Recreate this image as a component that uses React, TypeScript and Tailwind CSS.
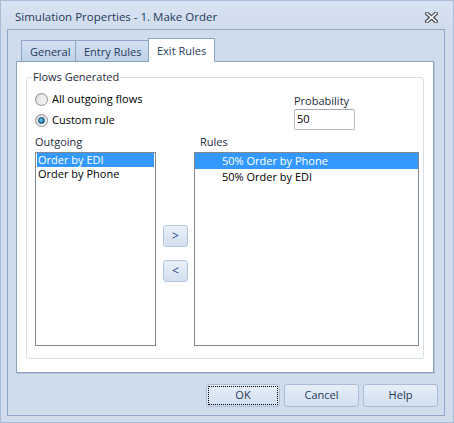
import React from "react";

type ItemProps = { label: string; selected?: boolean };

function CloseGlyph() {
  return (
    <svg width="13" height="11" viewBox="0 0 13 11">
      <path d="M2 1.5 L11 9.5 M11 1.5 L2 9.5" stroke="#4a4f57" strokeWidth="4" strokeLinecap="square" />
      <path d="M2 1.5 L11 9.5 M11 1.5 L2 9.5" stroke="#ffffff" strokeWidth="1.6" strokeLinecap="square" />
    </svg>
  );
}

function Radio({ label, checked }: { label: string; checked?: boolean }) {
  return (
    <div className="flex h-[16px] items-center gap-[4px]">
      <span className="flex h-[13px] w-[13px] items-center justify-center rounded-full border border-[#8f9193] bg-gradient-to-br from-[#cfd1d3] to-[#fafafa]">
        {checked ? (
          <span className="h-[7px] w-[7px] rounded-full border border-[#1b4f77] bg-[radial-gradient(circle_at_40%_40%,#6fd0f5,#1f6ea3_70%)]" />
        ) : (
          <span className="h-[8px] w-[8px] rounded-full bg-gradient-to-br from-[#e4e6e8] to-[#f4f5f6]" />
        )}
      </span>
      <span className="text-black">{label}</span>
    </div>
  );
}

function OutgoingItem({ label, selected }: ItemProps) {
  return (
    <div
      className={
        "flex h-[14px] items-center pl-[1px] leading-[14px] " +
        (selected ? "bg-[#3399ff] text-white" : "text-black")
      }
    >
      {label}
    </div>
  );
}

function RuleItem({ label, selected }: ItemProps) {
  return (
    <div
      className={
        "flex h-[16px] items-center pl-[27px] leading-[16px] " +
        (selected ? "bg-[#3399ff] text-white" : "text-black")
      }
    >
      {label}
    </div>
  );
}

function SmallButton({ children }: { children: React.ReactNode }) {
  return (
    <button className="flex h-[22px] w-[25px] items-center justify-center rounded-[3px] border border-[#b4c6dd] bg-gradient-to-b from-[#e8eff8] to-[#d3e0f0] text-[12px] text-[#2a3f8f]">
      {children}
    </button>
  );
}

function DialogButton({ children, focused, w }: { children: React.ReactNode; focused?: boolean; w: string }) {
  return (
    <button
      className={
        "flex h-[23px] items-center justify-center rounded-[3px] border border-[#a9bdd6] bg-gradient-to-b from-[#e6eef8] to-[#d2dff0] text-[#1e395b] " +
        w +
        (focused ? " outline-1 outline-offset-[-3px] outline-dotted outline-black" : "")
      }
    >
      {children}
    </button>
  );
}

export default function App() {
  return (
    <div className="flex h-[423px] w-[454px] flex-col border border-[#a9bcd6] bg-[#cfdcec] font-['Open_Sans',sans-serif] text-[11px]">
      {/* title bar */}
      <div className="flex h-[28px] items-center justify-between bg-gradient-to-b from-[#d9e4f2] to-[#cfdcec] pl-[14px] pr-[15px] pt-[4px] text-[#1e395b]">
        <span className="text-[11.5px]">Simulation Properties - 1. Make Order</span>
        <CloseGlyph />
      </div>

      <div className="ml-[6px] flex h-[387px] w-[438px] flex-col border border-[#8fa6c6] bg-[#cfdcec]">
        {/* tabs */}
        <div className="-mb-px ml-[13px] mt-[8px] flex h-[24px] items-end">
          <div className="flex h-[22px] w-[55px] items-center border-x border-t border-[#8ea6c6] bg-gradient-to-b from-[#d3e0f1] to-[#bfd1e8] pl-[8px] pt-[2px] text-[#1e395b]">
            General
          </div>
          <div className="flex h-[22px] w-[72px] items-center border-t border-[#8ea6c6] bg-gradient-to-b from-[#d3e0f1] to-[#bfd1e8] pl-[8px] pt-[2px] text-[#1e395b]">
            Entry Rules
          </div>
          <div className="relative z-10 flex h-[24px] w-[67px] items-center border-x border-t border-[#8ea6c6] bg-white pl-[8px] pt-[1px] text-[#1e395b]">
            Exit Rules
          </div>
        </div>

        {/* tab page */}
        <div className="ml-[8px] h-[312px] w-[418px] border border-[#8ba1c0] bg-white shadow-[1px_1px_0_#b3c5dc]">
          <div className="ml-[9px] mt-[15px] flex h-[282px] w-[398px] flex-col rounded-[3px] border border-[#d5dfe6]">
            <span className="-mt-[8px] ml-[5px] h-[14px] self-start bg-white px-[1px] leading-[14px] text-[#1e2b3b]">
              Flows Generated
            </span>

            <div className="flex">
              <div className="ml-[8px] flex flex-col gap-[5px] pt-[7px]">
                <Radio label="All outgoing flows" />
                <Radio label="Custom rule" checked />
              </div>
              <div className="ml-auto mr-[68px] flex flex-col pt-[10px]">
                <span className="h-[14px] leading-[14px] text-[#1e2b3b]">Probability</span>
                <div className="mt-[1px] flex h-[21px] w-[61px] items-center rounded-[2px] border border-[#b5bcc7] border-t-[#a1a8b3] pl-[2px] text-black">
                  50
                </div>
              </div>
            </div>

            <div className="ml-[8px] mt-[5px] flex">
              <div className="flex w-[121px] flex-col">
                <span className="h-[14px] leading-[14px] text-[#1e2b3b]">Outgoing</span>
                <div className="mt-[3px] h-[194px] border border-[#828790] px-[1px]">
                  <OutgoingItem label="Order by EDI" selected />
                  <OutgoingItem label="Order by Phone" />
                </div>
              </div>

              <div className="ml-[7px] flex w-[25px] flex-col">
                <div className="mt-[90px]">
                  <SmallButton>&gt;</SmallButton>
                </div>
                <div className="mt-[13px]">
                  <SmallButton>&lt;</SmallButton>
                </div>
              </div>

              <div className="ml-[6px] flex w-[225px] flex-col">
                <span className="h-[14px] pl-[6px] leading-[14px] text-[#1e2b3b]">Rules</span>
                <div className="mt-[3px] h-[194px] border border-[#828790]">
                  <RuleItem label="50% Order by Phone" selected />
                  <RuleItem label="50% Order by EDI" />
                </div>
              </div>
            </div>
          </div>
        </div>

        {/* dialog buttons */}
        <div className="mt-[11px] flex justify-end gap-[4px] pr-[6px]">
          <DialogButton w="w-[74px]" focused>
            OK
          </DialogButton>
          <DialogButton w="w-[75px]">Cancel</DialogButton>
          <DialogButton w="w-[75px]">Help</DialogButton>
        </div>
      </div>
    </div>
  );
}
